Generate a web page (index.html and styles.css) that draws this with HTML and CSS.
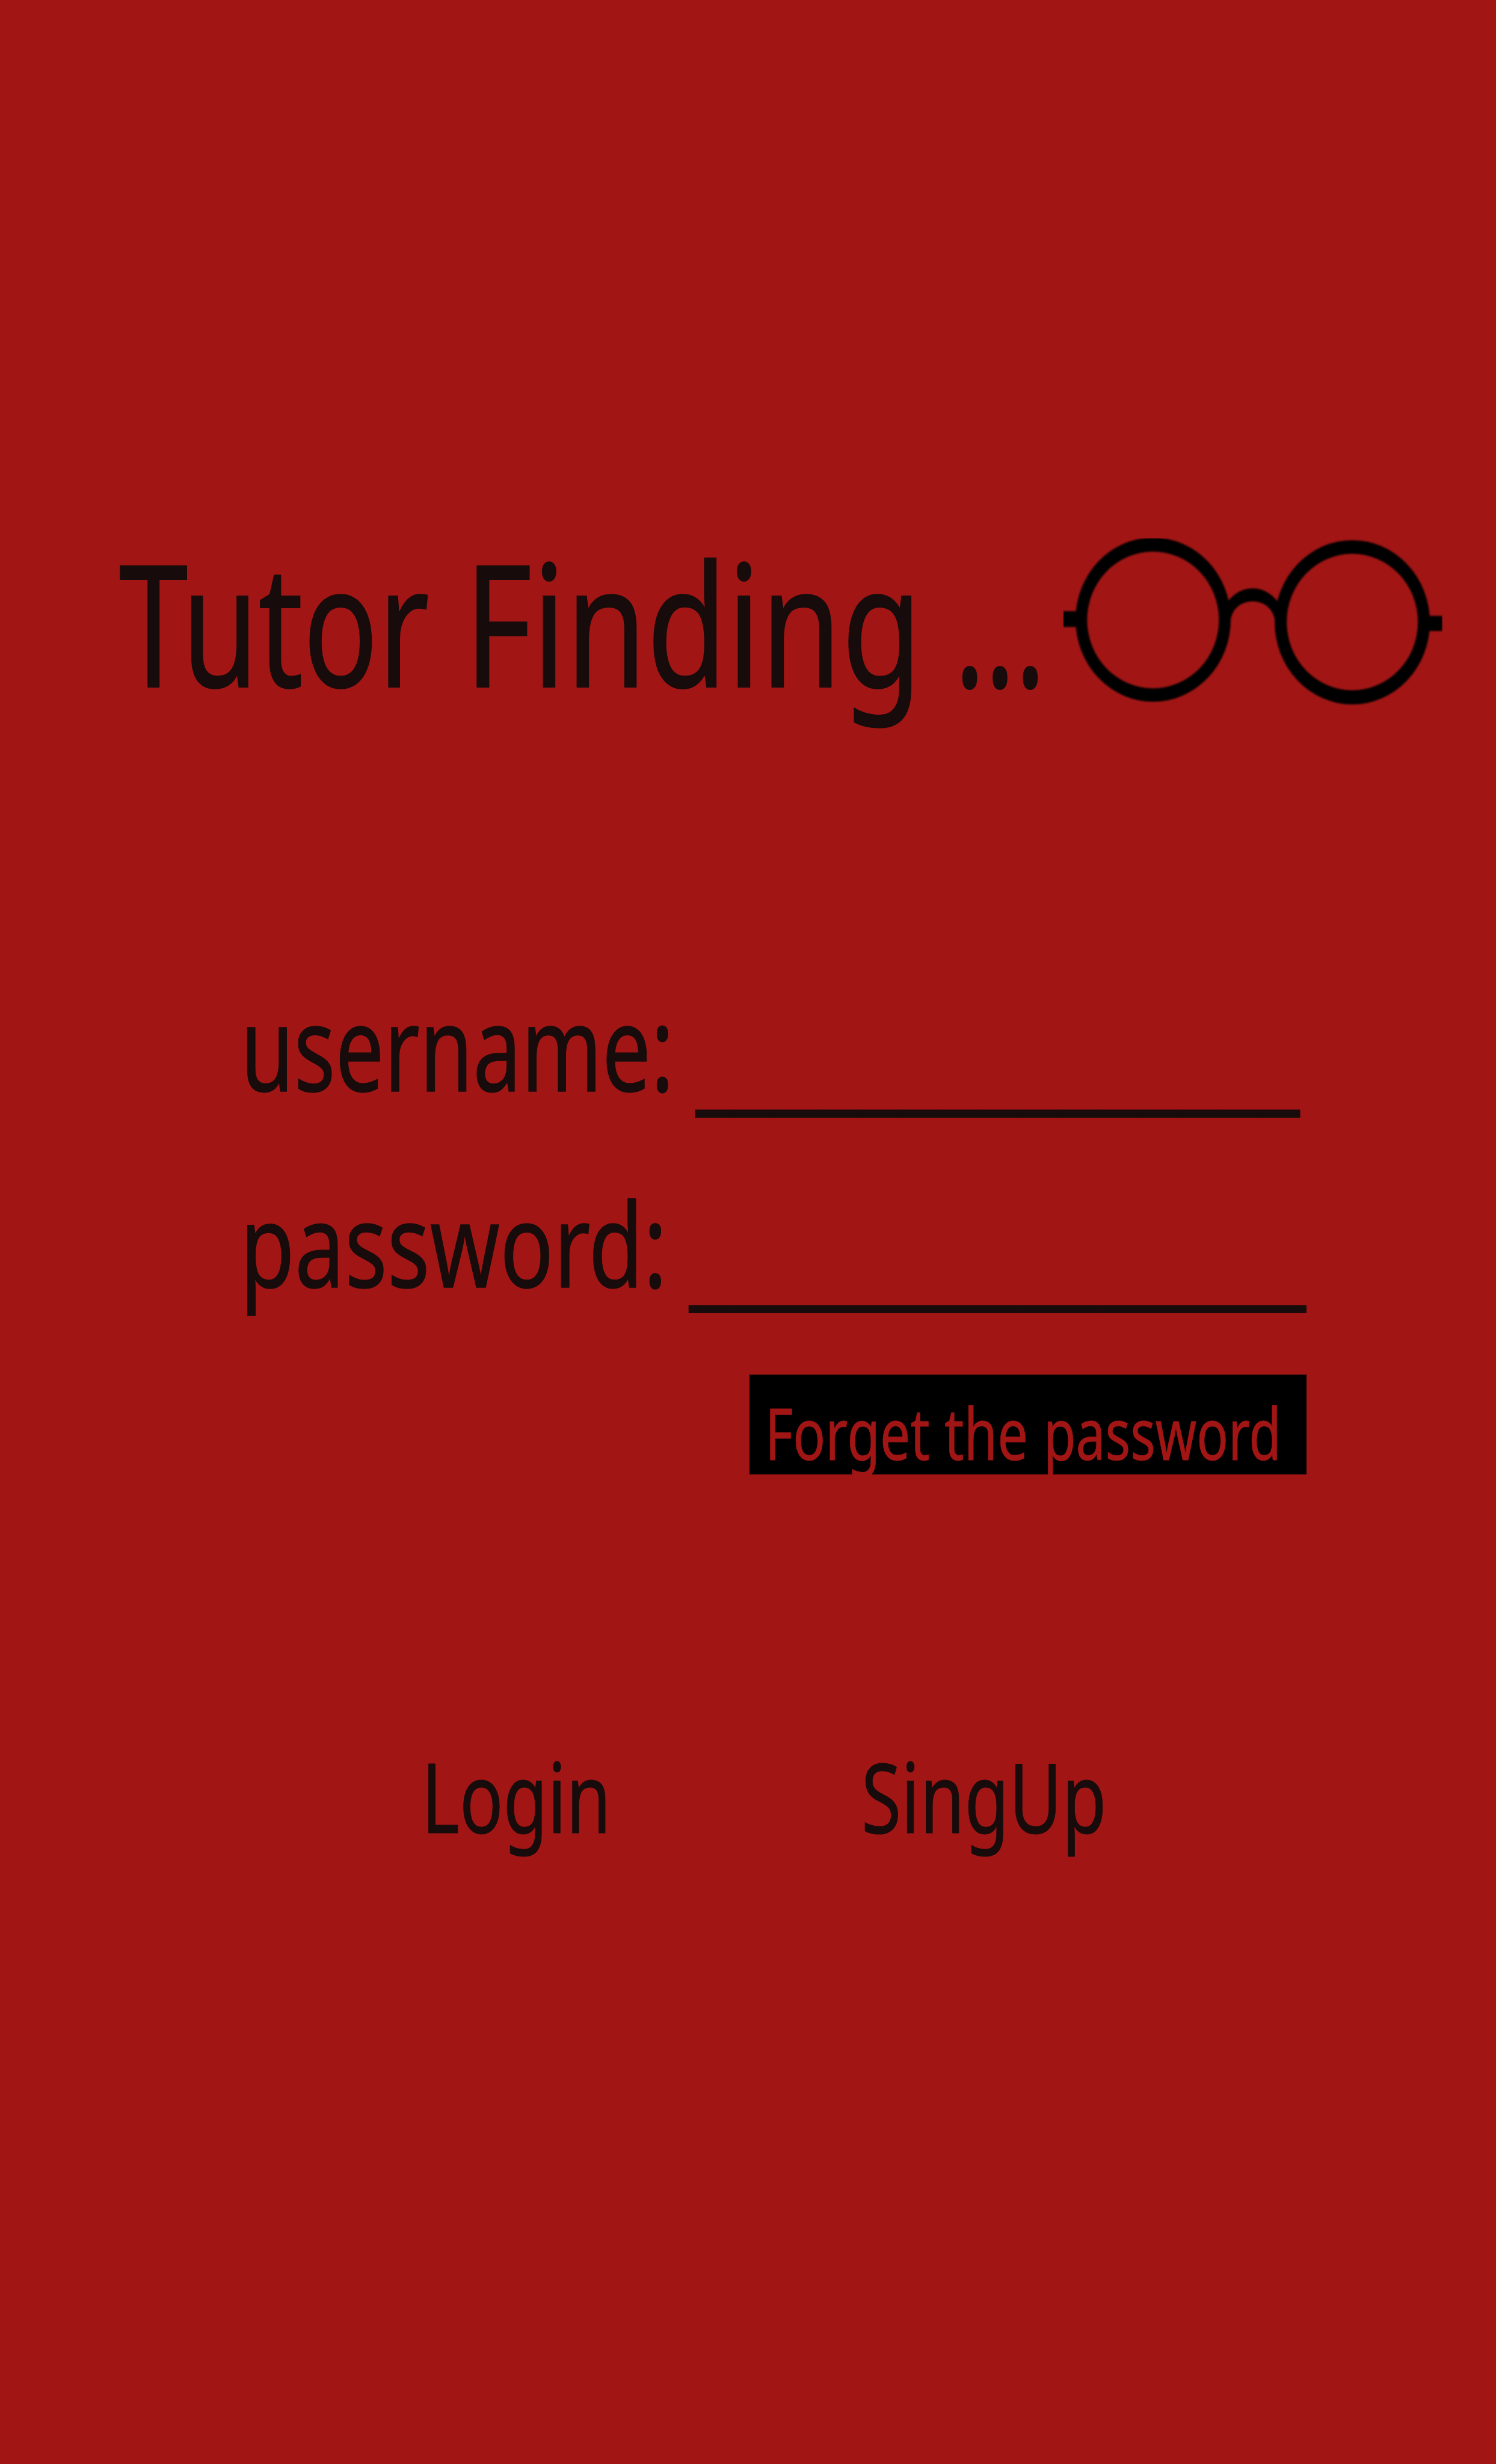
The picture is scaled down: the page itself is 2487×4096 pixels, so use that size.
FILE: index.html
```
<!DOCTYPE html>
<html lang="en">
<head>
<meta charset="utf-8">
<title>Tutor Finding</title>
<link rel="stylesheet" href="styles.css">
</head>
<body>
<main class="screen">
  <h1 class="brand">
    <span class="word tutor">Tutor</span>
    <span class="word finding">Finding</span>
    <span class="word dots">...</span>
    <svg class="glasses" viewBox="1813 918 646 285" aria-hidden="true">
      <defs><filter id="soft" x="-5%" y="-5%" width="110%" height="110%"><feGaussianBlur stdDeviation="1.5"/></filter></defs>
      <g filter="url(#soft)">
        <path fill-rule="evenodd" d="M1833.5 1056.5a132.3 140 0 1 0 264.6 0a132.3 140 0 1 0-264.6 0zM1853.3 1057a112.3 116.5 0 1 1 224.6 0a112.3 116.5 0 1 1-224.6 0z"/>
        <path fill-rule="evenodd" d="M2173 1061a132.3 140 0 1 0 264.6 0a132.3 140 0 1 0-264.6 0zM2193.5 1060.5a111.8 116.3 0 1 1 223.6 0a111.8 116.3 0 1 1-223.6 0z"/>
        <path d="M2083 1040Q2104 1003 2135.4 1003T2188 1040L2178 1068L2173 1056C2170 1039 2156 1025.5 2135.4 1025.5S2101 1039 2098 1056L2090 1068z"/>
        <path d="M1800 1042h40v27h-40zM2430 1050h29v26h-29z"/>
      </g>
    </svg>
  </h1>
  <div class="field username">
    <span class="word label">username:</span>
    <span class="word blank">_______________</span>
  </div>
  <div class="field password">
    <span class="word label">password:</span>
    <span class="word blank">_______________</span>
  </div>
  <div class="forgot">
    <span class="word forget">Forget</span>
    <span class="word the">the</span>
    <span class="word pass">password</span>
  </div>
  <div class="actions">
    <span class="word login">Login</span>
    <span class="word signup">SingUp</span>
  </div>
</main>
</body>
</html>
```
FILE: styles.css
```
/* 1rem is 1/25.5 of the screen width */
html { font-size: calc(100vw / 25.5); background: #a11615; }
body { margin: 0; }

.screen {
  box-sizing: border-box;
  width: 25.5rem;
  height: 42rem;
  padding-top: 8.855rem;
  overflow: hidden;
  background: #a11615;
  color: #170c0b;
  font-family: "Noto Sans", sans-serif;
  line-height: 1.2;
}

.word {
  display: block;
  width: max-content;
  white-space: pre;
  transform-origin: 0 0;
  -webkit-text-stroke: .007em currentColor;
}

.brand {
  display: grid;
  grid-template-columns: 5.887rem 8.353rem 1.857rem 6.46rem;
  height: 3.48rem;
  margin: 0;
  padding-left: 2.033rem;
  font-weight: 400;
}
.brand .word { font-size: 2.89rem; }
.tutor { transform: scaleX(.731); }
.finding { transform: scaleX(.771); }
.dots { transform: scaleX(.666); }
.glasses { display: block; width: 6.46rem; height: 2.85rem; margin-top: .325rem; }

.field { display: grid; height: 2.616rem; }
.field .blank { font-size: 2.18rem; -webkit-text-stroke: 0; }
.username {
  grid-template-columns: 7.752rem 10.31rem;
  margin-top: 4.225rem;
  padding-left: 4.098rem;
}
.username .label { padding-top: .054rem; font-size: 2.02rem; transform: scaleX(.7285); }
.username .blank { transform: scaleX(.71); }
.password {
  grid-template-columns: 7.653rem 10.53rem;
  margin-top: .714rem;
  padding-left: 4.09rem;
}
.password .label { padding-top: .104rem; font-size: 1.98rem; transform: scaleX(.766); }
.password .blank { transform: scaleX(.725); }

/* descenders run past the bottom edge in the page's own red */
.forgot {
  display: grid;
  grid-template-columns: 3.055rem 1.692rem 4rem;
  box-sizing: border-box;
  width: 9.492rem;
  height: 1.7rem;
  margin: .924rem 0 0 12.778rem;
  padding: .255rem 0 0 .26rem;
  background: #000;
  color: #a11615;
}
.forgot .word { font-size: 1.22rem; }
.forget { transform: scaleX(.75); }
.the { transform: scaleX(.757); }
.pass { transform: scaleX(.732); }

.actions {
  display: grid;
  grid-template-columns: 7.495rem 4.2rem;
  margin-top: 4.48rem;
  padding-left: 7.187rem;
}
.actions .word { font-size: 1.65rem; }
.login { transform: scaleX(.7465); }
.signup { transform: scaleX(.748); }
```
